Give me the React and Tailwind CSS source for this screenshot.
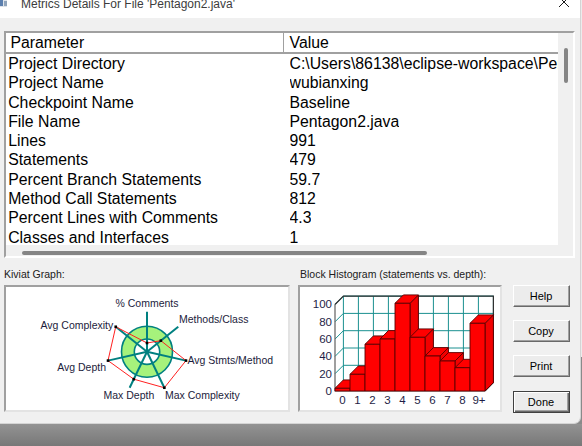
import React from 'react';

const rows = [
  ['Project Directory', 'C:\\Users\\86138\\eclipse-workspace\\Pentagon2'],
  ['Project Name', 'wubianxing'],
  ['Checkpoint Name', 'Baseline'],
  ['File Name', 'Pentagon2.java'],
  ['Lines', '991'],
  ['Statements', '479'],
  ['Percent Branch Statements', '59.7'],
  ['Method Call Statements', '812'],
  ['Percent Lines with Comments', '4.3'],
  ['Classes and Interfaces', '1'],
];

// kiviat axes, clockwise from the top
const axes = [
  { label: '% Comments', r: 8.7, x: 147, y: 307, anchor: 'middle' },
  { label: 'Methods/Class', r: 17.7, x: 179, y: 322.8, anchor: 'start' },
  { label: 'Avg Stmts/Method', r: 40, x: 187.5, y: 363.8, anchor: 'start' },
  { label: 'Max Complexity', r: 40, x: 165, y: 398.8, anchor: 'start' },
  { label: 'Max Depth', r: 30.5, x: 154.3, y: 398.8, anchor: 'end' },
  { label: 'Avg Depth', r: 40, x: 106, y: 370.5, anchor: 'end' },
  { label: 'Avg Complexity', r: 40, x: 113.3, y: 328.8, anchor: 'end' },
];

function Kiviat() {
  const cx = 147;
  const cy = 351.7;
  const pt = (i, r) => {
    const a = ((-90 + (i * 360) / 7) * Math.PI) / 180;
    return [cx + r * Math.cos(a), cy + r * Math.sin(a)];
  };
  const poly = axes.map((a, i) => pt(i, a.r));

  return (
    <svg width="282" height="123" viewBox="6 287 282 123" className="block">
      <circle cx={cx} cy={cy} r="25.5" fill="#a6f27c" stroke="#008080" strokeWidth="1.6" />
      <circle cx={cx} cy={cy} r="12.7" fill="#ffffff" stroke="#008080" strokeWidth="1.6" />
      {axes.map((a, i) => {
        const [x, y] = pt(i, 40);
        return <line key={a.label} x1={cx} y1={cy} x2={x} y2={y} stroke="#008080" strokeWidth="2" />;
      })}
      <polygon
        points={poly.map((p) => p.join(',')).join(' ')}
        fill="none"
        stroke="#ff2020"
        strokeWidth="1"
      />
      {poly.map(([x, y], i) => (
        <rect key={i} x={x - 1.3} y={y - 1.3} width="2.6" height="2.6" fill="#000" />
      ))}
      {axes.map((a) => (
        <text
          key={a.label}
          x={a.x}
          y={a.y}
          textAnchor={a.anchor}
          fontSize="10.5"
          fill="#1c1c3c"
          fontFamily="'Liberation Sans', Arial, sans-serif"
        >
          {a.label}
        </text>
      ))}
    </svg>
  );
}

function Histogram() {
  const base = 391;
  const x0 = 335;
  const bw = 15;
  const d = 8.4;
  const step = 17.3;
  const heights = [2.7, 16.7, 46.7, 52, 87.7, 53.7, 35, 30, 23.3, 67.7];
  const labels = ['0', '1', '2', '3', '4', '5', '6', '7', '8', '9+'];
  const bx0 = x0 + d;
  const bx1 = x0 + 10 * bw + d;
  const by = base - d;
  const wallTop = by - 5 * step;
  const k6 = [0, 1, 2, 3, 4, 5];
  const k11 = [0, 1, 2, 3, 4, 5, 6, 7, 8, 9, 10];

  return (
    <svg width="200" height="123" viewBox="300 287 200 123" className="block">
      {k6.map((k) => (
        <line key={'h' + k} x1={bx0} x2={bx1} y1={by - k * step} y2={by - k * step} stroke="#1a9090" strokeWidth="1" />
      ))}
      {k11.map((i) => (
        <line key={'v' + i} x1={bx0 + i * bw} x2={bx0 + i * bw} y1={wallTop} y2={by} stroke="#1a9090" strokeWidth="1" />
      ))}
      {k6.map((k) => (
        <line key={'s' + k} x1={x0} y1={base - k * step} x2={bx0} y2={by - k * step} stroke="#1a9090" strokeWidth="1" />
      ))}
      {k11.map((i) => (
        <line key={'f' + i} x1={x0 + i * bw} y1={base} x2={bx0 + i * bw} y2={by} stroke="#1a9090" strokeWidth="1" />
      ))}
      <polyline
        points={`${x0},${base - 5 * step} ${bx0},${wallTop} ${bx1},${wallTop} ${bx1},${by} ${x0 + 10 * bw},${base}`}
        fill="none"
        stroke="#303030"
        strokeWidth="1.2"
      />
      <polyline
        points={`${x0},${base - 5 * step} ${x0},${base} ${x0 + 10 * bw},${base}`}
        fill="none"
        stroke="#606060"
        strokeWidth="1.2"
      />
      {heights.map((h, i) => {
        const x = x0 + i * bw;
        const t = base - h;
        return (
          <g key={i} stroke="#5a0000" strokeWidth="0.9" strokeLinejoin="round">
            <polygon points={`${x + bw},${t} ${x + bw + d},${t - d} ${x + bw + d},${base - d} ${x + bw},${base}`} fill="#f20000" />
            <polygon points={`${x},${t} ${x + d},${t - d} ${x + bw + d},${t - d} ${x + bw},${t}`} fill="#ff0000" />
            <rect x={x} y={t} width={bw} height={h} fill="#ff0000" />
          </g>
        );
      })}
      {k6.map((k) => (
        <text
          key={'y' + k}
          x="332"
          y={base - k * step + 3.9}
          textAnchor="end"
          fontSize="11.5"
          fill="#1e1e46"
          fontFamily="'Liberation Sans', Arial, sans-serif"
        >
          {k * 20}
        </text>
      ))}
      {labels.map((l, i) => (
        <text
          key={l}
          x={x0 + i * bw + 7.5 + (l === '9+' ? 1.5 : 0)}
          y="404"
          textAnchor="middle"
          fontSize="11.5"
          fill="#1e1e46"
          fontFamily="'Liberation Sans', Arial, sans-serif"
        >
          {l}
        </text>
      ))}
    </svg>
  );
}

function Button({ children, isDefault }) {
  return (
    <button
      className={[
        'h-[22px] w-[57px] bg-[#ececec] text-[11px] leading-[20px] text-black',
        isDefault
          ? 'border border-[#404040] shadow-[inset_1px_1px_0_#ffffff,inset_-1px_-1px_0_#696969,inset_-2px_-2px_0_#a0a0a0]'
          : 'border border-t-white border-l-white border-b-[#696969] border-r-[#696969] shadow-[inset_-1px_-1px_0_#a0a0a0]',
      ].join(' ')}
    >
      {children}
    </button>
  );
}

export default function App() {
  return (
    <div className="flex h-[446px] w-[582px] flex-col overflow-hidden bg-[linear-gradient(to_bottom,#ececec_0,#ececec_357px,#8a8a8a_357px)] font-['Liberation_Sans',Arial,sans-serif]">
      <div className="flex h-[424px] w-[581px] flex-col rounded-br-[7px] border-b border-r border-[#d4d4d4] bg-[#f0f0f0]">
        {/* title bar */}
        <div className="flex h-[18px] items-start bg-white">
          <svg width="8" height="7" viewBox="0 0 8 7" className="mt-0 shrink-0">
            <rect x="0" y="0" width="7" height="7" fill="#dfe4ea" />
            <rect x="0" y="0" width="3" height="6" fill="#5b7fae" />
            <rect x="4" y="1" width="3" height="5" fill="#8fa3ba" />
          </svg>
          <span className="-mt-[3px] ml-[13px] text-[12px] leading-[14px] text-[#3c3c3c]">
            Metrics Details For File 'Pentagon2.java'
          </span>
          <svg width="12" height="12" viewBox="0 0 12 12" className="-mt-[4px] ml-auto mr-[10px]">
            <path d="M1 1 L11 11 M11 1 L1 11" stroke="#1a1a1a" strokeWidth="1" />
          </svg>
        </div>

        {/* metrics table */}
        <div className="ml-[4px] mt-[13px] flex h-[227px] w-[571px] border-2 border-b-white border-l-[#a0a0a0] border-r-white border-t-[#a0a0a0] text-[15.8px] text-black">
          <div className="flex w-[552px] flex-col">
            <div className="flex h-[21px] shrink-0 border-b-2 border-[#a0a0a0] bg-white leading-[19px]">
              <div className="w-[278px] border-r border-[#a0a0a0] pl-[4.4px]">Parameter</div>
              <div className="border-l border-white pl-[4.6px]">Value</div>
            </div>
            <div className="h-[191px] shrink-0 overflow-hidden bg-white">
              {rows.map(([name, value]) => (
                <div key={name} className="flex h-[19.3px] leading-[19.3px]">
                  <span className="w-[283.5px] shrink-0 pl-[2.2px]">{name}</span>
                  <span className="overflow-hidden whitespace-nowrap">{value}</span>
                </div>
              ))}
            </div>
            <div className="h-[11px] shrink-0 bg-[#f0f0f0] pt-[6px]">
              <div className="ml-[16px] h-[4px] w-[405px] rounded-full bg-[#858585]" />
            </div>
          </div>
          <div className="w-[15px] bg-[#f0f0f0] pt-[15px]">
            <div className="ml-[6px] h-[35px] w-[4px] rounded-full bg-[#858585]" />
          </div>
        </div>

        {/* graphs and buttons */}
        <div className="ml-[4px] mt-[10px] flex">
          <div className="w-[286px]">
            <div className="h-[12px] text-[10.5px] leading-[12px] text-[#202020]">Kiviat Graph:</div>
            <div className="mt-[5px] h-[127px] w-[286px] border-2 border-b-[#e3e3e3] border-l-[#a0a0a0] border-r-[#e3e3e3] border-t-[#a0a0a0] bg-white">
              <Kiviat />
            </div>
          </div>
          <div className="ml-[8px] w-[204px]">
            <div className="h-[12px] pl-[2px] text-[10.5px] leading-[12px] text-[#202020]">
              Block Histogram (statements vs. depth):
            </div>
            <div className="mt-[5px] h-[127px] w-[204px] border-2 border-b-[#e3e3e3] border-l-[#a0a0a0] border-r-[#e3e3e3] border-t-[#a0a0a0] bg-white">
              <Histogram />
            </div>
          </div>
          <div className="ml-[10.5px] flex flex-col gap-[13.2px] pt-[17px]">
            <Button>Help</Button>
            <Button>Copy</Button>
            <Button>Print</Button>
            <Button isDefault>Done</Button>
          </div>
        </div>
      </div>
      <div className="h-[22px] bg-linear-to-b from-[#939393] to-[#787878]" />
    </div>
  );
}
